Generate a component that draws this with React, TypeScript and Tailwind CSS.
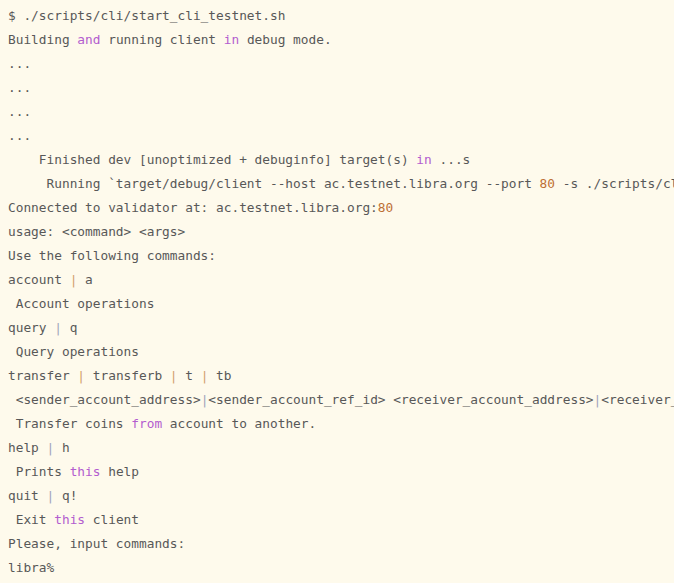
import React from "react";

type Seg = [string, string?];

const K = "text-[#b35dcf]";
const N = "text-[#bd6f34]";
const P = "text-[#d39e6a]";
const G = "text-[#9ea3bb]";

const lines: Seg[][] = [
  [["$ ./scripts/cli/start_cli_testnet.sh"]],
  [["Building "], ["and", K], [" running client "], ["in", K], [" debug mode."]],
  [["..."]],
  [["..."]],
  [["..."]],
  [["..."]],
  [["    Finished dev [unoptimized + debuginfo] target(s) "], ["in", K], [" ...s"]],
  [["     Running `target/debug/client --host ac.testnet.libra.org --port "], ["80", N], [" -s ./scripts/cli/consensus_peers.config.toml`"]],
  [["Connected to validator at: ac.testnet.libra.org:"], ["80", N]],
  [["usage: <command> <args>"]],
  [["Use the following commands:"]],
  [["account "], ["|", P], [" a"]],
  [[" Account operations"]],
  [["query "], ["|", G], [" q"]],
  [[" Query operations"]],
  [["transfer "], ["|", P], [" transferb "], ["|", P], [" t "], ["|", P], [" tb"]],
  [[" <sender_account_address>"], ["|", G], ["<sender_account_ref_id> <receiver_account_address>"], ["|", G], ["<receiver_account_ref_id> <number_of_coins>"]],
  [[" Transfer coins "], ["from", K], [" account to another."]],
  [["help "], ["|", G], [" h"]],
  [[" Prints "], ["this", K], [" help"]],
  [["quit "], ["|", G], [" q!"]],
  [[" Exit "], ["this", K], [" client"]],
  [["Please, input commands:"]],
  [["libra%"]],
];

export default function App() {
  return (
    <div className="w-[679px] h-[583px] bg-white overflow-hidden">
      <pre className="w-[674px] h-[583px] bg-[#fefaec] overflow-hidden pl-2 pt-1 text-[#585858] text-[12.8px] leading-[24px] font-['DejaVu_Sans_Mono',monospace]">
        {lines.map((line, i) => (
          <div key={i} className="whitespace-pre">
            {line.map((s, j) => (
              <span key={j} className={s[1]}>{s[0]}</span>
            ))}
          </div>
        ))}
      </pre>
    </div>
  );
}
